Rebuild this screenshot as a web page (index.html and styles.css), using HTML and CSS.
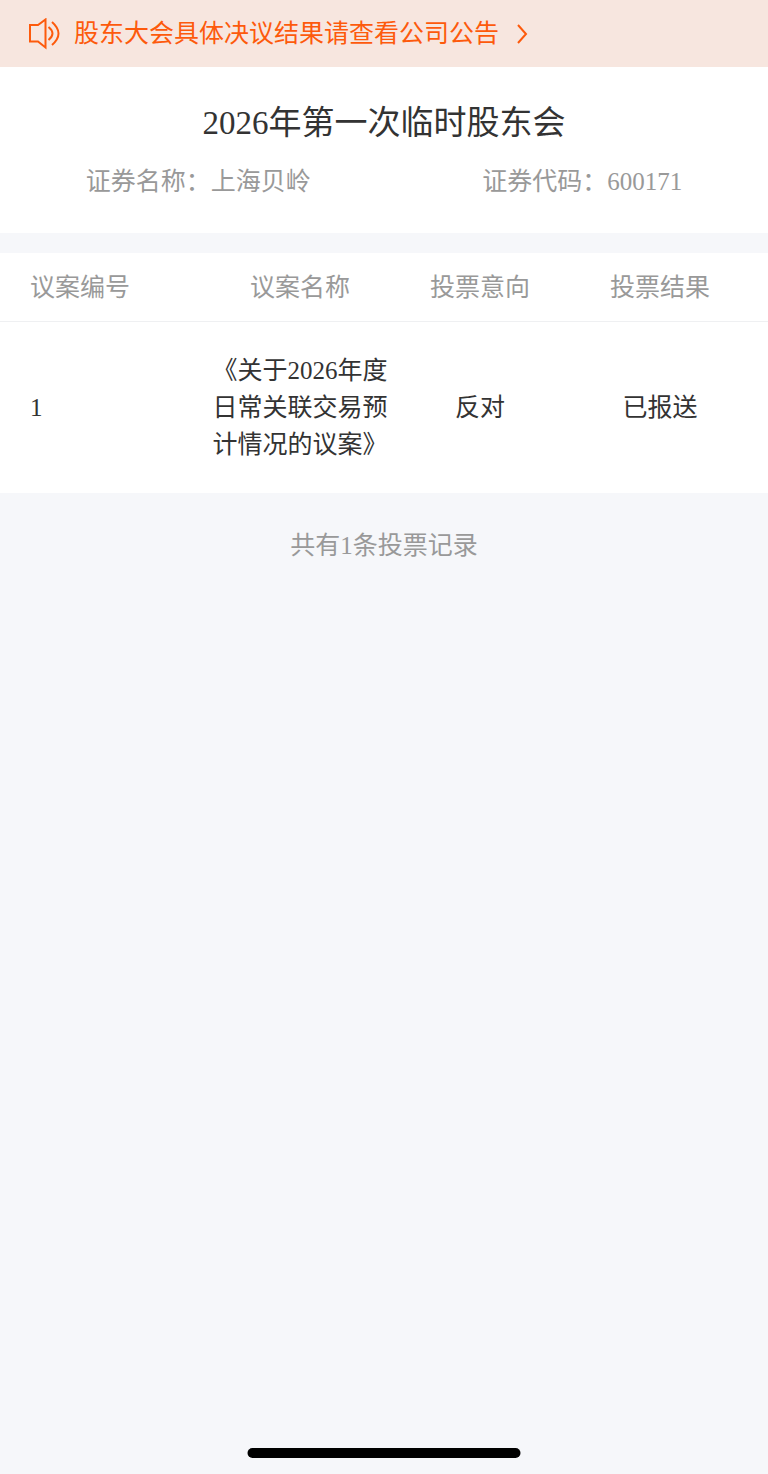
FILE: index.html
```html
<!DOCTYPE html>
<html lang="zh-CN">
<head>
  <meta charset="UTF-8">
  <meta name="viewport" content="width=device-width, initial-scale=1">
  <title>投票记录</title>
  <link rel="stylesheet" href="styles.css">
</head>
<body>

  <a class="notice" href="#">
    <svg class="notice-icon" viewBox="0 0 32 32" aria-hidden="true">
      <path d="M2 7h8l7.500-5.500v28L10 23.500H2z"/>
      <path d="M20.500 9q8 6.500 0 13M24 4q13 11.500 0 23"/>
    </svg>
    <span>股东大会具体决议结果请查看公司公告</span>
    <svg class="notice-arrow" viewBox="0 0 12 20" aria-hidden="true">
      <path d="M2 1l8 9-8 9"/>
    </svg>
  </a>

  <header class="meeting">
    <h1>2026年第一次临时股东会</h1>
    <div class="meeting-info">
      <span>证券名称：上海贝岭</span>
      <span>证券代码：600171</span>
    </div>
  </header>

  <main>
    <table class="votes">
      <thead>
        <tr>
          <th>议案编号</th>
          <th>议案名称</th>
          <th>投票意向</th>
          <th>投票结果</th>
        </tr>
      </thead>
      <tbody>
        <tr>
          <td>1</td>
          <td>《关于2026年度日常关联交易预计情况的议案》</td>
          <td>反对</td>
          <td>已报送</td>
        </tr>
      </tbody>
    </table>
    <p class="total">共有1条投票记录</p>
  </main>

  <div class="home-bar"></div>

</body>
</html>
```

FILE: styles.css
```css
* {
  box-sizing: border-box;
}
body {
  margin: 0;
  min-height: 100vh;
  background-color: #f6f7fa;
  color: #333;
  font-family: "Liberation Serif", "Noto Sans CJK SC", serif;
  font-size: 25px;
  line-height: 37px;
}
.notice {
  display: flex;
  align-items: center;
  padding: 15px 28px;
  background-color: #f7e6df;
  color: #fd5a0c;
  text-decoration: none;
}
.notice svg {
  fill: none;
  stroke: currentColor;
  stroke-width: 2;
}
.notice-icon {
  width: 32px;
  height: 32px;
  margin-right: 14px;
}
.notice-arrow {
  width: 12px;
  height: 20px;
  margin-left: 17px;
}
.meeting {
  padding: 32px 0 33px;
  background-color: #fff;
}
.meeting h1 {
  margin: 0 0 16px;
  font-size: 33px;
  font-weight: normal;
  line-height: 48px;
  text-align: center;
}
.meeting-info {
  display: flex;
  justify-content: space-around;
  color: #999;
}
.votes {
  width: 100%;
  margin-top: 20px;
  table-layout: fixed;
  border-spacing: 0;
  background-color: #fff;
}
.votes th {
  padding: 16px 0 15px;
  border-bottom: 1px solid #eff0f2;
  color: #999;
  font-weight: normal;
}
.votes td {
  padding: 30px 0;
  text-align: center;
}
.votes th:first-child,
.votes td:first-child {
  width: 210px;
  padding-left: 30px;
  text-align: left;
}
.votes th:last-child,
.votes td:last-child {
  width: 198px;
  padding-right: 18px;
}
.total {
  margin: 34px 0;
  color: #999;
  text-align: center;
}
.home-bar {
  position: fixed;
  bottom: 16px;
  left: 50%;
  width: 273px;
  height: 10px;
  border-radius: 5px;
  background-color: #000;
  transform: translateX(-50%);
}
```
